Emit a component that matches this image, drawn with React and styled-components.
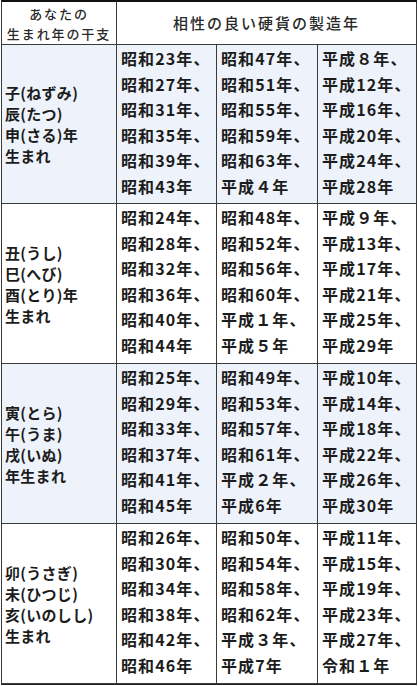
import React from "react";
import styled, { createGlobalStyle } from "styled-components";

const GlobalStyle = createGlobalStyle`
  html, body {
    margin: 0;
    padding: 0;
    background: #fff;
  }
  body {
    font-family: "Noto Sans CJK JP", "Noto Sans", sans-serif;
    color: #1c1c1c;
  }
`;

const Table = styled.div`
  display: grid;
  grid-template-columns: 115px 100px 101px 99px;
  grid-template-rows: 43px 159px 160px 160px 160px;
  margin-left: 1px;
  width: 415px;
  border-left: 1px solid #3a3a3a;
  border-top: 2px solid #111;
  border-bottom: 1px solid #222;
  box-shadow: 0 1px 0 #888;
`;

const HeadCell = styled.div`
  display: flex;
  flex-direction: column;
  align-items: center;
  justify-content: center;
  grid-column: ${(p) => p.span || "auto"};
  border-right: 1px solid #3a3a3a;
  border-bottom: 1px solid #3a3a3a;
  background: #fff;
  color: #2a2a2a;
  font-size: ${(p) => (p.big ? "15px" : "13px")};
  font-weight: 500;
  letter-spacing: ${(p) => (p.big ? "2px" : "1.9px")};
  line-height: 20px;
  padding-top: ${(p) => (p.big ? "0" : "1px")};
`;

const LabelCell = styled.div`
  display: flex;
  flex-direction: column;
  justify-content: center;
  padding: 0 0 0 3px;
  border-right: 1px solid #3a3a3a;
  border-bottom: 1px solid #3a3a3a;
  background: ${(p) => (p.tint ? "#eef3fb" : "#fff")};
  font-size: 15px;
  font-weight: 700;
  line-height: 21px;
  letter-spacing: 0.3px;
`;

const YearCell = styled.div`
  padding: 1px 0 0 4px;
  border-right: 1px solid #3a3a3a;
  border-bottom: 1px solid #3a3a3a;
  background: ${(p) => (p.tint ? "#eef3fb" : "#fff")};
  font-size: 16px;
  font-weight: 700;
  line-height: 25.5px;
  letter-spacing: 1.1px;
  white-space: nowrap;
`;

const Line = styled.div``;

const rows = [
  {
    label: ["子(ねずみ)", "辰(たつ)", "申(さる)年", "生まれ"],
    cols: [
      ["昭和23年、", "昭和27年、", "昭和31年、", "昭和35年、", "昭和39年、", "昭和43年"],
      ["昭和47年、", "昭和51年、", "昭和55年、", "昭和59年、", "昭和63年、", "平成４年"],
      ["平成８年、", "平成12年、", "平成16年、", "平成20年、", "平成24年、", "平成28年"],
    ],
  },
  {
    label: ["丑(うし)", "巳(へび)", "酉(とり)年", "生まれ"],
    cols: [
      ["昭和24年、", "昭和28年、", "昭和32年、", "昭和36年、", "昭和40年、", "昭和44年"],
      ["昭和48年、", "昭和52年、", "昭和56年、", "昭和60年、", "平成１年、", "平成５年"],
      ["平成９年、", "平成13年、", "平成17年、", "平成21年、", "平成25年、", "平成29年"],
    ],
  },
  {
    label: ["寅(とら)", "午(うま)", "戌(いぬ)", "年生まれ"],
    cols: [
      ["昭和25年、", "昭和29年、", "昭和33年、", "昭和37年、", "昭和41年、", "昭和45年"],
      ["昭和49年、", "昭和53年、", "昭和57年、", "昭和61年、", "平成２年、", "平成6年"],
      ["平成10年、", "平成14年、", "平成18年、", "平成22年、", "平成26年、", "平成30年"],
    ],
  },
  {
    label: ["卯(うさぎ)", "未(ひつじ)", "亥(いのしし)", "生まれ"],
    cols: [
      ["昭和26年、", "昭和30年、", "昭和34年、", "昭和38年、", "昭和42年、", "昭和46年"],
      ["昭和50年、", "昭和54年、", "昭和58年、", "昭和62年、", "平成３年、", "平成7年"],
      ["平成11年、", "平成15年、", "平成19年、", "平成23年、", "平成27年、", "令和１年"],
    ],
  },
];

const App = () => {
  return (
    <>
      <GlobalStyle />
      <Table>
        <HeadCell>
          <Line>あなたの</Line>
          <Line>生まれ年の干支</Line>
        </HeadCell>
        <HeadCell span="span 3" big>
          相性の良い硬貨の製造年
        </HeadCell>
        {rows.map((row, i) => (
          <React.Fragment key={i}>
            <LabelCell tint={i % 2 === 0}>
              {row.label.map((t) => (
                <Line key={t}>{t}</Line>
              ))}
            </LabelCell>
            {row.cols.map((col, j) => (
              <YearCell key={j} tint={i % 2 === 0}>
                {col.map((y) => (
                  <Line key={y}>{y}</Line>
                ))}
              </YearCell>
            ))}
          </React.Fragment>
        ))}
      </Table>
    </>
  );
};

export default App;
